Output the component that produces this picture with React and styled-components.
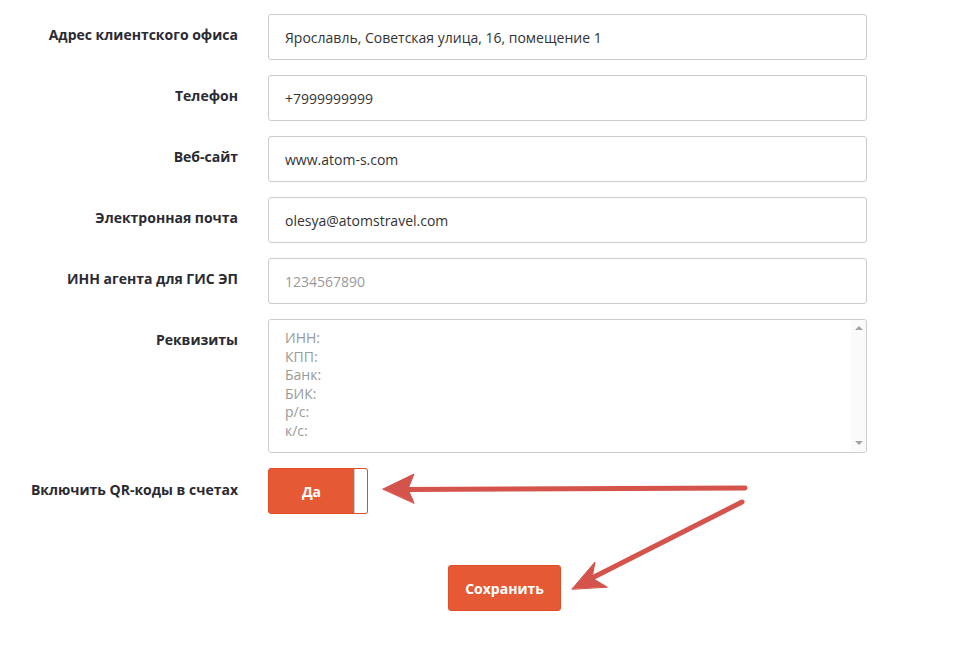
import React from 'react';
import styled, { createGlobalStyle } from 'styled-components';

const GlobalStyle = createGlobalStyle`
    body {
        margin: 0;
        background: #ffffff;
        font-family: 'Open Sans', 'Noto Sans', sans-serif;
    }
`;

const Page = styled.div`
    position: relative;
    width: 959px;
    height: 663px;
    padding-top: 14px;
    box-sizing: border-box;
`;

const Form = styled.div`
    display: flex;
    flex-direction: column;
    gap: 15px;
`;

const Row = styled.div`
    display: grid;
    grid-template-columns: 238px 599px;
    column-gap: 30px;
    align-items: start;
`;

const Label = styled.div`
    text-align: right;
    font-size: 14px;
    font-weight: 700;
    line-height: 20px;
    color: #2a2a33;
    padding-top: ${({ $offset }) => $offset || 11}px;
`;

const Input = styled.input`
    box-sizing: border-box;
    width: 100%;
    height: 46px;
    padding: 0 16px;
    border: 1px solid #cccccc;
    border-radius: 3px;
    font-family: inherit;
    font-size: 14px;
    color: #333333;
    outline: none;
    &::placeholder {
        color: #999999;
    }
`;

const AreaBox = styled.div`
    box-sizing: border-box;
    height: 134px;
    display: flex;
    border: 1px solid #cccccc;
    border-radius: 3px;
    overflow: hidden;
`;

const Area = styled.textarea`
    flex: 1;
    border: 0;
    resize: none;
    padding: 9px 16px;
    font-family: inherit;
    font-size: 14px;
    line-height: 18.6px;
    color: #333333;
    outline: none;
    &::placeholder {
        color: #999999;
    }
`;

const ScrollTrack = styled.div`
    width: 15px;
    background: #fafafa;
    display: flex;
    flex-direction: column;
    justify-content: space-between;
    align-items: center;
    padding: 6px 0 7px;
`;

const ScrollArrow = styled.div`
    width: 0;
    height: 0;
    border-left: 4.5px solid transparent;
    border-right: 4.5px solid transparent;
    ${({ $down }) => ($down ? 'border-top: 4px solid #a3a3a3;' : 'border-bottom: 4px solid #a3a3a3;')}
`;

const Toggle = styled.div`
    box-sizing: border-box;
    width: 100px;
    height: 46px;
    display: flex;
    background: #e55a34;
    border: 1px solid #e04e28;
    border-radius: 3px;
`;

const ToggleText = styled.span`
    flex: 1;
    display: flex;
    align-items: center;
    justify-content: center;
    color: #ffffff;
    font-size: 14px;
    font-weight: 700;
`;

const Knob = styled.span`
    width: 12px;
    background: #ffffff;
    border-left: 1px solid #c9cbd6;
    border-radius: 0 2px 2px 0;
`;

const Actions = styled.div`
    padding: 51px 0 0 448px;
`;

const SaveButton = styled.button`
    width: 113px;
    height: 46px;
    border: 1px solid #e04e28;
    border-radius: 3px;
    background: #e55a34;
    color: #ffffff;
    font-family: inherit;
    font-size: 14px;
    font-weight: 700;
    cursor: pointer;
`;

const Overlay = styled.svg`
    position: absolute;
    left: 0;
    top: 0;
    pointer-events: none;
`;

const fields = [
    { label: 'Адрес клиентского офиса', value: 'Ярославль, Советская улица, 16, помещение 1' },
    { label: 'Телефон', value: '+7999999999' },
    { label: 'Веб-сайт', value: 'www.atom-s.com' },
    { label: 'Электронная почта', value: 'olesya@atomstravel.com' },
    { label: 'ИНН агента для ГИС ЭП', placeholder: '1234567890' },
];

const App = () => (
    <Page>
        <GlobalStyle />
        <Form>
            {fields.map((f) => (
                <Row key={f.label}>
                    <Label>{f.label}</Label>
                    <Input defaultValue={f.value} placeholder={f.placeholder} />
                </Row>
            ))}
            <Row>
                <Label>Реквизиты</Label>
                <AreaBox>
                    <Area placeholder={'ИНН:\nКПП:\nБанк:\nБИК:\nр/с:\nк/с:'} />
                    <ScrollTrack>
                        <ScrollArrow />
                        <ScrollArrow $down />
                    </ScrollTrack>
                </AreaBox>
            </Row>
            <Row>
                <Label $offset={12}>Включить QR-коды в счетах</Label>
                <Toggle>
                    <ToggleText>Да</ToggleText>
                    <Knob />
                </Toggle>
            </Row>
        </Form>
        <Actions>
            <SaveButton>Сохранить</SaveButton>
        </Actions>
        <Overlay width="959" height="663" viewBox="0 0 959 663">
            <g fill="#d4534a" stroke="#d4534a" strokeLinecap="round" strokeLinejoin="round">
                <line x1="745" y1="488" x2="405" y2="489.5" strokeWidth="5" />
                <polygon points="383,489 414,474 408,489 414,503" strokeWidth="1" />
                <line x1="742" y1="502" x2="592" y2="578" strokeWidth="5" />
                <polygon points="572,589 595,562 592,578 607,587" strokeWidth="1" />
            </g>
        </Overlay>
    </Page>
);

export default App;
